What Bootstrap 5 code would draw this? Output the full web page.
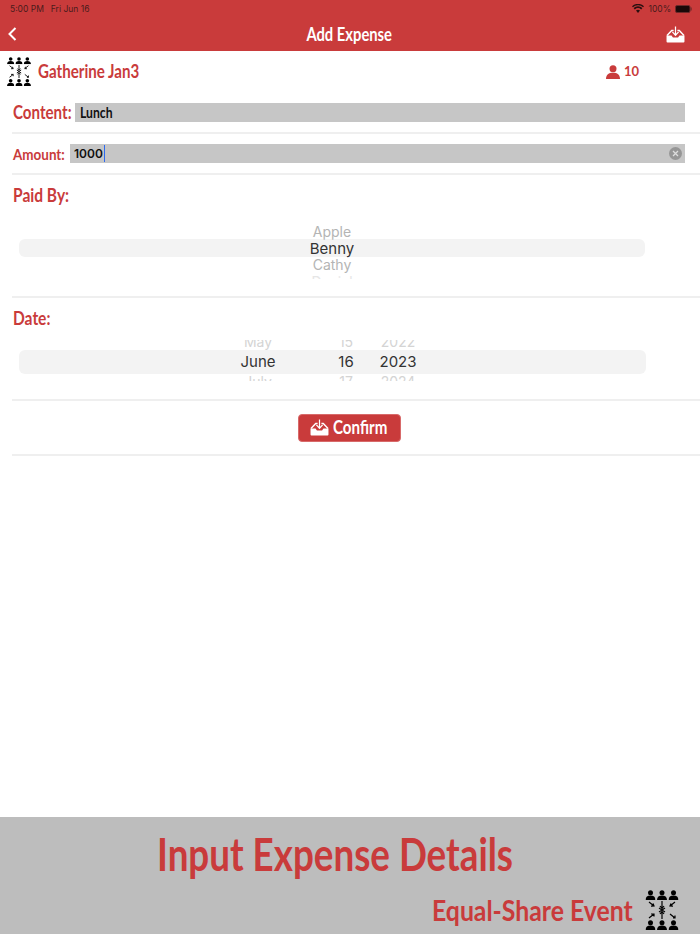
<!DOCTYPE html>
<html lang="en">
<head>
<meta charset="utf-8">
<title>Add Expense</title>
<link href="https://cdn.jsdelivr.net/npm/bootstrap@5.3.0/dist/css/bootstrap.min.css" rel="stylesheet">
<style>
:root{--rd:#c93b3b;}
html,body{margin:0;height:934px;overflow:hidden;background:#fff;}
.screen{height:934px;}
.brandfont{font-family:"Lato","Noto Sans",sans-serif;font-weight:700;}
.squeeze{display:inline-block;white-space:nowrap;transform:scaleX(.84);transform-origin:left center;}
.squeezemid{display:inline-block;white-space:nowrap;transform:scaleX(.82);transform-origin:center;}
.topbar{background:var(--rd);height:51px;}
.statusrow{height:17px;padding:0 8px 0 10px;font:8.5px "Inter","Liberation Sans",sans-serif;color:#4a1c1c;}
.statusrow .st-gap{margin-left:7px;}
.navrow{height:34px;padding:0 10px 0 8px;}
.navside{width:30px;}
.navrightside{padding-right:5px;}
.navtitle{color:#fff;font-size:18px;line-height:28px;margin-top:-1px;}
.userrow{height:41px;padding:0 0 0 6px;}
.username{color:var(--rd);font-size:18px;margin-left:6px;width:110px;}
.membercount{color:var(--rd);font-size:13px;width:94px;margin-left:auto;}
.formrow{margin-left:12px;border-bottom:2px solid #efefef;}
.rowcontent{height:42px;padding-top:10px;}
.rowamount{height:41px;padding-top:10px;}
.rowpaid{height:123px;}
.rowdate{height:103px;}
.rowconfirm{height:55px;}
.fieldlabel{color:var(--rd);line-height:20px;padding-left:1px;}
.labelbig{font-size:18px;width:63px;}
.labelsmall{font-size:16px;width:58px;}
.fieldbox{background:#c6c6c6;height:19px;width:610px;font-size:14.500px;color:#111;padding-left:5px;line-height:19px;}
.contentbox{margin-top:1px;}
.amountbox{width:615px;padding-left:4px;font-family:"Inter","Liberation Sans",sans-serif;font-size:12px;font-weight:600;}
.caretbar{display:inline-block;width:1.5px;height:17px;background:#2f6bf0;vertical-align:middle;margin-left:1px;margin-top:-2px;}
.clearbtn{width:13px;height:13px;margin-right:3px;}
.sectionlabel{color:var(--rd);font-size:18.5px;line-height:20px;padding:10px 0 0 1px;}
.pickerwrap{font-family:"Inter","Liberation Sans",sans-serif;color:#333;}
.pickerband{position:absolute;left:7px;background:#f3f3f3;border-radius:6px;}
.paidwheel{height:55px;margin-top:19px;width:634px;position:relative;text-align:center;overflow:hidden;}
.paidwheel .pickerband{top:15px;height:18px;width:626px;}
.wheelitem{position:relative;line-height:16.5px;font-size:14px;color:#b4b4b4;}
.wheelitem.now{font-size:15px;color:#333;}
.wheelitem.fade4{color:#e6e6e6;}
.paidlist{padding-left:14px;width:626px;}
.datewheel{height:41px;margin-top:12px;width:640px;position:relative;overflow:hidden;}
.datewheel .pickerband{top:10px;height:24px;width:627px;}
.datecol{position:absolute;top:-8px;text-align:center;width:80px;}
.datecol div{line-height:20px;height:20px;}
.datecol div.now{font-size:15px;color:#333;}
.datecol div.dim{color:#d4d4d4;font-size:14px;}
.colm{left:206px;}.cold{left:294px;}.coly{left:346px;}
.confirmbtn{background:var(--rd);border:1px solid #d86a6a;color:#fff;width:103px;height:28px;border-radius:4px;font-size:18px;padding:0;margin-left:-14px;}
.confirmbtn:hover{background:var(--rd);color:#fff;}
.confirmtext{width:56px;text-align:left;}
.pagefooter{height:117px;background:#bdbdbd;color:var(--rd);}
.bigtitle{font-size:45px;padding-left:157px;line-height:48px;padding-top:13px;}
.bigtitle .squeeze{transform:scaleX(.817);}
.subtitle{font-size:29px;padding-right:21px;line-height:32px;margin-top:12px;}
.subtitlebox{width:199px;}
.subtitlebox .squeeze{transform:scaleX(.855);}
.subtitle svg{margin-left:14px;}
</style>
</head>
<body>
<svg width="0" height="0" class="d-none" aria-hidden="true">
<defs>
<symbol id="person" viewBox="0 0 10 10">
<circle cx="5" cy="2.7" r="2.5"/><path d="M0 10c0-3 2-4.400 5-4.400S10 7 10 10z"/>
</symbol>
<symbol id="netlogo" viewBox="0 0 34 40">
<g>
<use href="#person" x="0.500" y="0" width="10" height="10"/><use href="#person" x="12" y="0" width="10" height="10"/><use href="#person" x="23.500" y="0" width="10" height="10"/>
<use href="#person" x="0.500" y="30" width="10" height="10"/><use href="#person" x="12" y="30" width="10" height="10"/><use href="#person" x="23.500" y="30" width="10" height="10"/>
</g>
<g stroke="#000" stroke-width="1.200" fill="none">
<path d="M4 12l5 4M8 13.500l1 2.500-3 .2"/><path d="M30 12l-5 4M26 13.500l-1 2.500 3 .2"/>
<path d="M17 11v7M15 16l2 2.500 2-2.500"/><path d="M17 29v-7M15 24l2-2.500 2 2.500"/>
<path d="M14 18l6 4M20 18l-6 4"/>
<path d="M9 24l-5 4M6 24l3 0 0 2.500"/><path d="M25 24l5 4M28 28l2 0 0-2.500"/>
</g>
</symbol>
<symbol id="traydown" viewBox="0 0 20 18">
<path d="M1 10 6 4.800h2M19 10l-5-5.200h-2" fill="none" stroke="#fff" stroke-width="1.500"/>
<path d="M.5 10h5.300l1.500 2.300h5.400L14.200 10h5.300v6.500q0 1-1 1h-17q-1 0-1-1z" fill="#fff"/>
<path d="M10 .5v9M6.700 6.300 10 9.800l3.300-3.500" fill="none" stroke="#fff" stroke-width="1.300"/>
</symbol>
</defs>
</svg>
<div class="screen d-flex flex-column">
  <header class="topbar flex-shrink-0">
    <div class="statusrow d-flex align-items-center justify-content-between">
      <div><span>5:00 PM</span><span class="st-gap">Fri Jun 16</span></div>
      <div class="d-flex align-items-center gap-1">
        <svg width="12" height="9" viewBox="0 0 12 9" aria-hidden="true"><path d="M6 9 4 6.600a3 3 0 0 1 4 0zM2.800 5.400 1.600 4a6.500 6.500 0 0 1 8.800 0L9.200 5.400a4.700 4.700 0 0 0-6.400 0zM.9 3.200 0 2.200a8.800 8.800 0 0 1 12 0l-.9 1a7.500 7.500 0 0 0-10.200 0z" fill="#2a1010"/></svg>
        <span>100%</span>
        <svg width="17" height="8" viewBox="0 0 17 8" aria-hidden="true"><rect x=".5" y=".5" width="14.500" height="7" rx="1.500" fill="#1a0808" stroke="#6e2a2a"/><rect x="15.500" y="2.500" width="1.200" height="3" fill="#6e2a2a"/></svg>
      </div>
    </div>
    <div class="navrow d-flex align-items-center justify-content-between">
      <div class="navside d-flex"><svg width="9" height="14" viewBox="0 0 9 14" aria-hidden="true"><path d="M7.500 1 1.500 7l6 6" fill="none" stroke="#fff" stroke-width="2"/></svg></div>
      <div class="navtitle brandfont"><span class="squeezemid">Add Expense</span></div>
      <div class="navside navrightside d-flex justify-content-end"><svg width="19" height="17" aria-hidden="true"><use href="#traydown"/></svg></div>
    </div>
  </header>
  <main class="flex-grow-1">
    <div class="userrow d-flex align-items-center">
      <svg width="26" height="29" aria-hidden="true"><use href="#netlogo"/></svg>
      <div class="username brandfont"><span class="squeeze">Gatherine Jan3</span></div>
      <div class="membercount brandfont d-flex align-items-center">
        <svg width="14" height="14" class="me-1" fill="#c93b3b" aria-hidden="true"><use href="#person"/></svg><span>10</span>
      </div>
    </div>
    <div class="formrow rowcontent d-flex align-items-start">
      <div class="fieldlabel labelbig brandfont"><span class="squeeze">Content:</span></div>
      <div class="fieldbox contentbox brandfont"><span class="squeeze">Lunch</span></div>
    </div>
    <div class="formrow rowamount d-flex align-items-start">
      <div class="fieldlabel labelsmall brandfont"><span class="squeeze">Amount:</span></div>
      <div class="fieldbox amountbox d-flex align-items-center justify-content-between">
        <span>1000<span class="caretbar"></span></span>
        <svg class="clearbtn" viewBox="0 0 13 13" aria-hidden="true"><circle cx="6.500" cy="6.500" r="6.500" fill="#969696"/><path d="M4 4l5 5M9 4l-5 5" stroke="#ddd" stroke-width="1.300"/></svg>
      </div>
    </div>
    <div class="formrow rowpaid">
      <div class="sectionlabel brandfont"><span class="squeeze">Paid By:</span></div>
      <div class="paidwheel pickerwrap">
        <div class="pickerband"></div>
        <div class="paidlist">
          <div class="wheelitem">Apple</div>
          <div class="wheelitem now">Benny</div>
          <div class="wheelitem">Cathy</div>
          <div class="wheelitem fade4">Daniel</div>
        </div>
      </div>
    </div>
    <div class="formrow rowdate">
      <div class="sectionlabel brandfont"><span class="squeeze">Date:</span></div>
      <div class="datewheel pickerwrap">
        <div class="pickerband"></div>
        <div class="datecol colm"><div class="dim">May</div><div class="now">June</div><div class="dim">July</div></div>
        <div class="datecol cold"><div class="dim">15</div><div class="now">16</div><div class="dim">17</div></div>
        <div class="datecol coly"><div class="dim">2022</div><div class="now">2023</div><div class="dim">2024</div></div>
      </div>
    </div>
    <div class="formrow rowconfirm d-flex align-items-center justify-content-center">
      <button type="button" class="btn confirmbtn brandfont d-flex align-items-center justify-content-center gap-1">
        <svg width="19" height="17" aria-hidden="true"><use href="#traydown"/></svg><span class="confirmtext"><span class="squeeze">Confirm</span></span>
      </button>
    </div>
  </main>
  <footer class="pagefooter flex-shrink-0 brandfont">
    <div class="bigtitle"><span class="squeeze">Input Expense Details</span></div>
    <div class="subtitle d-flex align-items-center justify-content-end">
      <div class="subtitlebox"><span class="squeeze">Equal-Share Event</span></div>
      <svg width="34" height="40" aria-hidden="true"><use href="#netlogo"/></svg>
    </div>
  </footer>
</div>
<script src="https://cdn.jsdelivr.net/npm/bootstrap@5.3.0/dist/js/bootstrap.bundle.min.js"></script>
</body>
</html>
